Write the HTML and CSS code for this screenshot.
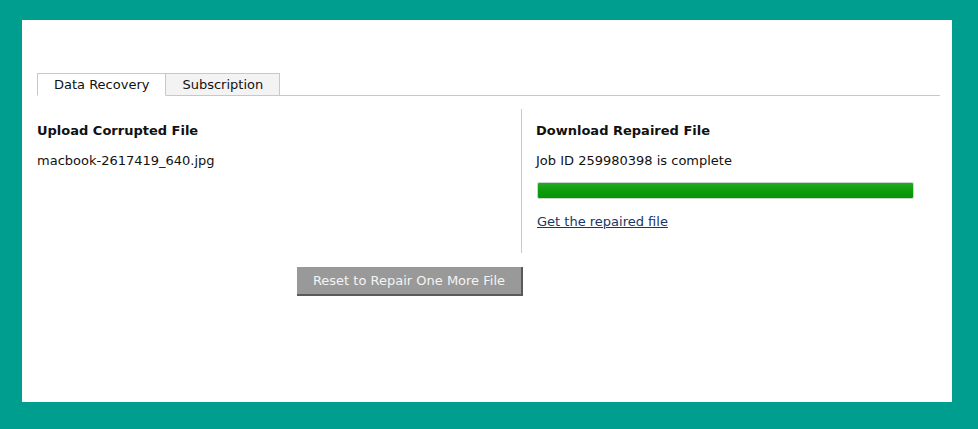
FILE: index.html
```html
<!DOCTYPE html>
<html lang="en">
<head>
    <meta charset="UTF-8">
    <title>Data Recovery</title>
    <link rel="stylesheet" href="styles.css">
</head>
<body>
    <div id="page">
        <div id="tabs">
            <div class="tab active">Data Recovery</div>
            <div class="tab">Subscription</div>
        </div>

        <div id="columns">
            <div class="col col-upload">
                <div class="col-title">Upload Corrupted File</div>
                <div class="col-line">macbook-2617419_640.jpg</div>
            </div>
            <div class="col col-download">
                <div class="col-title">Download Repaired File</div>
                <div class="col-line">Job ID 259980398 is complete</div>
                <div class="progress"><div class="progress-fill" style="width: 100%"></div></div>
                <a class="result-link" href="#">Get the repaired file</a>
            </div>
        </div>

        <div id="actions">
            <div id="reset">Reset to Repair One More File</div>
        </div>
    </div>
</body>
</html>
```

FILE: styles.css
```css
html {
    height: 100%;
}
body {
    margin: 0;
    padding: 20px 26px 27px 22px;
    background-color: #009e8f;
    font-family: "DejaVu Sans", Verdana, sans-serif;
    font-size: 13px;
    color: #111;
}
#page {
    background-color: white;
    height: 382px;
    box-sizing: border-box;
    padding: 53px 12px 0 15px;
}
#tabs {
    display: flex;
    border-bottom: 1px solid #c8c8c8;
    height: 22px;
}
.tab {
    box-sizing: border-box;
    height: 23px;
    padding: 0 16px;
    line-height: 21px;
    border: 1px solid #c8c8c8;
    background-color: #f3f3f3;
    margin-bottom: -1px;
}
.tab + .tab {
    border-left: none;
}
.tab.active {
    background-color: white;
    border-bottom-color: white;
}
#columns {
    display: grid;
    grid-template-columns: 485px 1fr;
    margin-top: 13px;
}
.col {
    height: 144px;
    box-sizing: border-box;
    padding-top: 14px;
}
.col-upload {
    border-right: 1px solid #c8c8c8;
}
.col-download {
    padding-left: 14px;
}
.col-title {
    font-weight: bold;
    line-height: 16px;
}
.col-line {
    line-height: 16px;
    margin-top: 14px;
}
.progress {
    width: 377px;
    height: 17px;
    margin: 13px 0 0 1px;
    box-sizing: border-box;
    border: 1px solid #c9d8c9;
    border-radius: 2px;
    background-color: #eee;
    overflow: hidden;
}
.progress-fill {
    height: 100%;
    background: linear-gradient(#22aa22, #0a9a0a 60%, #079407);
}
.result-link {
    display: block;
    margin: 15px 0 0 1px;
    line-height: 16px;
    color: #1a3662;
    text-decoration: underline;
}
#actions {
    display: flex;
    justify-content: flex-end;
    width: 486px;
    margin-top: 14px;
}
#reset {
    background-color: #999;
    color: #f4f4f4;
    line-height: 26px;
    padding: 1px 16px 0 16px;
    border-right: 2px solid #5a5a5a;
    border-bottom: 2px solid #5a5a5a;
    cursor: pointer;
}
```
